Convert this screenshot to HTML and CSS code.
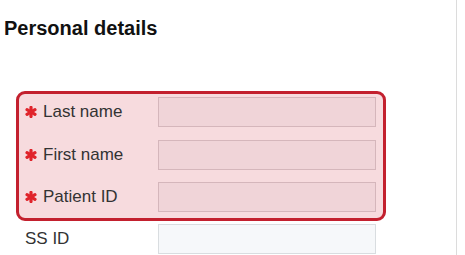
FILE: index.html
```html
<!DOCTYPE html>
<html>
<head>
<meta charset="utf-8">
<link rel="stylesheet" href="styles.css">
</head>
<body>
<div class="page">
  <h2 class="title">Personal details</h2>
  <div class="required-group">
    <div class="row">
      <label class="label"><svg class="star" viewBox="0 0 12 12"><g stroke="#e0242b" stroke-width="3.2" stroke-linecap="round"><line x1="6" y1="1.4" x2="6" y2="10.6"/><line x1="2" y1="3.7" x2="10" y2="8.3"/><line x1="2" y1="8.3" x2="10" y2="3.7"/></g></svg>Last name</label>
      <div class="input req"></div>
    </div>
    <div class="row">
      <label class="label"><svg class="star" viewBox="0 0 12 12"><g stroke="#e0242b" stroke-width="3.2" stroke-linecap="round"><line x1="6" y1="1.4" x2="6" y2="10.6"/><line x1="2" y1="3.7" x2="10" y2="8.3"/><line x1="2" y1="8.3" x2="10" y2="3.7"/></g></svg>First name</label>
      <div class="input req"></div>
    </div>
    <div class="row">
      <label class="label"><svg class="star" viewBox="0 0 12 12"><g stroke="#e0242b" stroke-width="3.2" stroke-linecap="round"><line x1="6" y1="1.4" x2="6" y2="10.6"/><line x1="2" y1="3.7" x2="10" y2="8.3"/><line x1="2" y1="8.3" x2="10" y2="3.7"/></g></svg>Patient ID</label>
      <div class="input req"></div>
    </div>
  </div>
  <div class="row plain">
    <label class="label">SS ID</label>
    <div class="input"></div>
  </div>
</div>
</body>
</html>
```
FILE: styles.css
```css
html, body {
  margin: 0;
  padding: 0;
  background: #ffffff;
}
body {
  width: 465px;
  height: 255px;
  overflow: hidden;
  font-family: "Liberation Sans", Arial, sans-serif;
}
.page {
  width: 457px;
  height: 255px;
  box-sizing: border-box;
  border-right: 1px solid #dcdcdc;
  overflow: hidden;
}
.title {
  margin: 16px 0 0 4px;
  font-size: 20px;
  line-height: 24px;
  font-weight: bold;
  color: #111;
}
.required-group {
  margin: 51px 0 0 16px;
  width: 370px;
  box-sizing: border-box;
  border: 3px solid #c3202e;
  border-radius: 9px;
  background: #f7dbde;
  padding: 3px 7px 6px 6px;
  display: flex;
  flex-direction: column;
  gap: 12.5px;
}
.row {
  display: flex;
  align-items: center;
  height: 30px;
}
.row.plain {
  margin: 3px 0 0 25px;
}
.label {
  width: 133px;
  flex: none;
  display: flex;
  align-items: center;
  font-size: 17px;
  color: #333;
}
.star {
  width: 12px;
  height: 12px;
  margin-right: 6px;
  flex: none;
}
.input {
  width: 218px;
  height: 30px;
  box-sizing: border-box;
  border: 1px solid #d9dde0;
  background: #f6f8fa;
}
.input.req {
  border-color: #d5b6bb;
  background: #f0d4d8;
}
```
